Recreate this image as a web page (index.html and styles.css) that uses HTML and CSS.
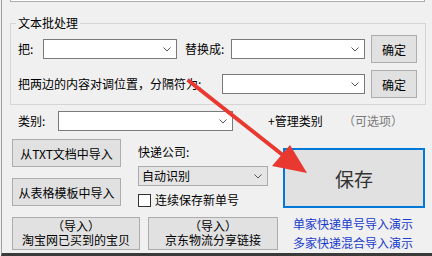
FILE: index.html
```html
<!DOCTYPE html>
<html lang="zh-CN">
<head>
    <meta charset="UTF-8">
    <title>快递单号导入</title>
    <link rel="stylesheet" href="styles.css">
</head>
<body>
    <div class="window">
        <div class="topbox"></div>

        <fieldset class="group">
            <legend>文本批处理</legend>
            <div class="row row-1">
                <span class="lbl lbl-ba">把:</span>
                <div class="combo w134"><svg class="chev" viewBox="0 0 8 5"><polyline points="0.5,0.5 4,4 7.5,0.5"/></svg></div>
                <span class="lbl lbl-th">替换成:</span>
                <div class="combo w134"><svg class="chev" viewBox="0 0 8 5"><polyline points="0.5,0.5 4,4 7.5,0.5"/></svg></div>
                <button class="btn btn-ok">确定</button>
            </div>
            <div class="row row-2">
                <span class="lbl lbl-swap">把两边的内容对调位置，分隔符为:</span>
                <div class="combo w143"><svg class="chev" viewBox="0 0 8 5"><polyline points="0.5,0.5 4,4 7.5,0.5"/></svg></div>
                <button class="btn btn-ok">确定</button>
            </div>
        </fieldset>

        <div class="row row-cat">
            <span class="lbl lbl-cat">类别:</span>
            <div class="combo w175"><svg class="chev" viewBox="0 0 8 5"><polyline points="0.5,0.5 4,4 7.5,0.5"/></svg></div>
            <span class="manage">+管理类别</span>
            <span class="hint">（可选项）</span>
        </div>

        <div class="mid">
            <div class="col-import">
                <button class="btn btn-imp">从TXT文档中导入</button>
                <button class="btn btn-imp">从表格模板中导入</button>
            </div>
            <div class="col-express">
                <div class="lbl-exp">快递公司:</div>
                <div class="combo combo-list">自动识别<svg class="chev" viewBox="0 0 8 5"><polyline points="0.5,0.5 4,4 7.5,0.5"/></svg></div>
                <label class="check"><span class="box"></span>连续保存新单号</label>
            </div>
            <button class="btn btn-save">保存</button>
        </div>

        <div class="bottom">
            <button class="btn btn-two w128"><span class="ln">（导入）</span><span class="ln">淘宝网已买到的宝贝</span></button>
            <button class="btn btn-two w130"><span class="ln">（导入）</span><span class="ln">京东物流分享链接</span></button>
            <div class="links">
                <a href="#">单家快递单号导入演示</a>
                <a href="#">多家快递混合导入演示</a>
            </div>
        </div>

        <!-- annotation arrow drawn over the form -->
        <svg class="arrow" width="432" height="256" viewBox="0 0 432 256">
            <line x1="189" y1="81" x2="284" y2="156" stroke="#e8382f" stroke-width="4" stroke-linecap="round"/>
            <polygon points="307,173 290,145 272,166" fill="#e8382f"/>
        </svg>
    </div>
</body>
</html>
```

FILE: styles.css
```css
* {
    box-sizing: border-box;
}
body {
    margin: 0;
    padding: 0;
    background-color: #f0f0f0;
    font-family: "Noto Sans CJK SC", "Microsoft YaHei", sans-serif;
    font-size: 12px;
    color: #000;
}
.window {
    position: relative;
    width: 431px;
    height: 256px;
    margin-left: 1px;
    border-left: 1px solid #a0a0a0;
    border-bottom: 3px solid #3a3a3a;
    overflow: hidden;
}
.topbox {
    margin-left: 8px;
    width: 415px;
    height: 2px;
    background: #fff;
    border: 1px solid #adadad;
    border-top: none;
}
.group {
    margin: 13px 0 0 8px;
    padding: 0;
    width: 416px;
    height: 90px;
    min-width: 0;
    border: 1px solid #d5d5d5;
}
.group legend {
    margin-left: 5px;
    padding: 0 2px;
    line-height: 16px;
}
.row {
    display: flex;
    align-items: center;
}
.lbl {
    line-height: 16px;
    white-space: nowrap;
}
.row-1 {
    margin-top: 4px;
    height: 28px;
}
.row-2 {
    margin-top: 7px;
    height: 28px;
}
.lbl-ba {
    margin-left: 7px;
    width: 25px;
}
.lbl-th {
    margin-left: 8px;
    width: 46px;
}
.lbl-swap {
    margin-left: 7px;
    width: 204px;
}
.combo {
    position: relative;
    height: 20px;
    background: #fff;
    border: 1px solid #7a7a7a;
}
.chev {
    position: absolute;
    right: 5px;
    top: 7px;
    width: 8px;
    height: 5px;
    fill: none;
    stroke: #555;
    stroke-width: 1;
}
.w134 { width: 134px; }
.w143 { width: 143px; }
.w175 { width: 175px; }
.w128 { width: 128px; }
.w130 { width: 130px; }
.btn {
    font-family: inherit;
    font-size: 12px;
    color: #000;
    background: #e1e1e1;
    border: 1px solid #adadad;
    padding: 0;
    border-radius: 0;
}
.btn-ok {
    margin-left: 6px;
    width: 46px;
    height: 28px;
}
.row-cat {
    margin-top: 6px;
    height: 20px;
}
.lbl-cat {
    margin-left: 16px;
    width: 40px;
}
.manage {
    margin-left: 35px;
    width: 55px;
    line-height: 16px;
}
.hint {
    margin-left: 20px;
    color: #7a7a7a;
    line-height: 16px;
}
.mid {
    display: flex;
    margin-top: 8px;
    height: 67px;
}
.col-import {
    display: flex;
    flex-direction: column;
    gap: 11px;
    margin-left: 10px;
    width: 109px;
}
.btn-imp {
    height: 28px;
}
.col-express {
    margin-left: 17px;
    width: 130px;
}
.lbl-exp {
    margin-top: 5px;
    line-height: 16px;
}
.combo-list {
    margin-top: 6px;
    background: #e5e5e5;
    border-color: #acacac;
    padding-left: 3px;
    line-height: 18px;
}
.check {
    display: flex;
    align-items: center;
    margin-top: 6px;
    line-height: 16px;
}
.box {
    width: 13px;
    height: 13px;
    margin-right: 4px;
    background: #fff;
    border: 1px solid #333;
}
.btn-save {
    margin: 9px 0 0 15px;
    width: 142px;
    height: 60px;
    border: 2px solid #0078d7;
    font-size: 19px;
    color: #333;
}
.bottom {
    display: flex;
    margin-top: 11px;
}
.btn-two {
    display: flex;
    flex-direction: column;
    align-items: center;
    justify-content: center;
    height: 33px;
    font-family: "Liberation Sans", "Noto Sans CJK SC", sans-serif;
}
.btn-two .ln {
    display: block;
    height: 14px;
    line-height: 14px;
}
.btn-two:first-child {
    margin-left: 10px;
}
.btn-two + .btn-two {
    margin-left: 8px;
}
.links {
    display: flex;
    flex-direction: column;
    margin: -3px 0 0 15px;
}
.links a {
    color: #1a3ccc;
    text-decoration: none;
    line-height: 19px;
}
.arrow {
    position: absolute;
    left: -2px;
    top: 0;
    pointer-events: none;
}
```
